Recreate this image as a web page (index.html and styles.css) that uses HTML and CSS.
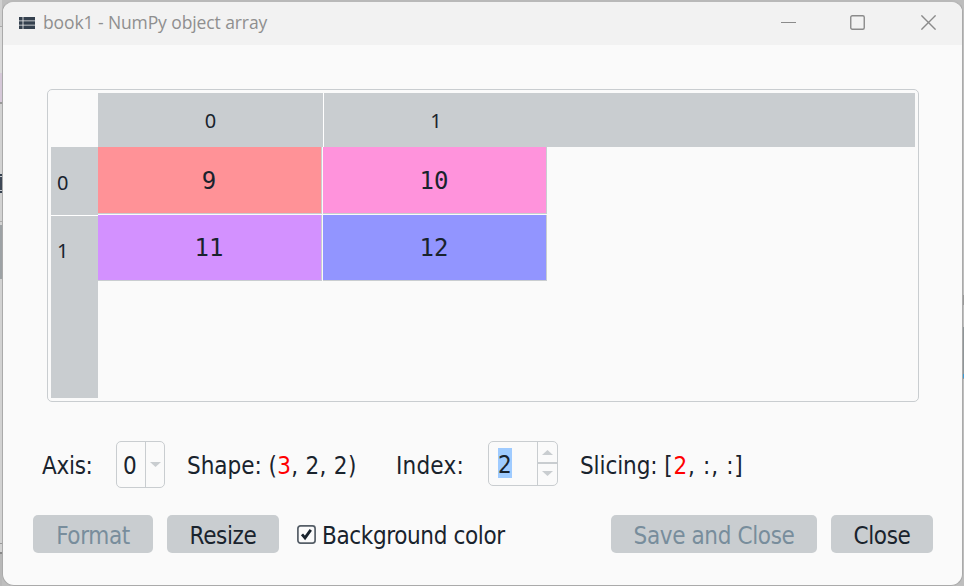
FILE: index.html
```html
<!DOCTYPE html>
<html lang="en">
<head>
<meta charset="utf-8">
<title>book1 - NumPy object array</title>
<link rel="stylesheet" href="styles.css">
</head>
<body>
<main class="window">
  <header class="titlebar">
    <svg class="app-icon" width="16" height="12" viewBox="0 0 16 12"><path fill="#35414f" d="M0 0h3.6v3.4H0zM4.4 0H16v3.4H4.4zM0 4.3h3.6v3.4H0zM4.4 4.3H16v3.4H4.4zM0 8.6h3.6V12H0zM4.4 8.6H16V12H4.4z"/></svg>
    <h1 class="title">book1 - NumPy object array</h1>
    <svg class="minimize" width="15" height="15" viewBox="0 0 15 15"><path d="M0 7.5h15"/></svg>
    <svg class="maximize" width="15" height="15" viewBox="0 0 15 15"><rect x=".75" y=".75" width="13.5" height="13.5" rx="1.5"/></svg>
    <svg class="dismiss" width="15" height="15" viewBox="0 0 15 15"><path d="M.4.4l14.2 14.2M14.6.4L.4 14.6"/></svg>
  </header>
  <section class="array">
    <div class="corner"></div>
    <div class="columns"><div class="col">0</div><div class="col">1</div></div>
    <div class="rows"><div class="row">0</div><div class="row">1</div></div>
    <div class="cells">
      <div class="cell red">9</div><div class="cell pink">10</div>
      <div class="cell violet">11</div><div class="cell blue">12</div>
    </div>
  </section>
  <section class="slicing">
    <span class="axis-label">Axis:</span>
    <div class="combo"><span class="combo-value">0</span><span class="combo-arrow"><svg width="11" height="5" viewBox="0 0 11 5"><path d="M0 0h11L5.5 5z"/></svg></span></div>
    <span class="shape">Shape: <span class="tuple">(<b>3</b>, 2, 2)</span></span>
    <span class="index-label">Index:</span>
    <div class="spin">
      <span class="spin-value"><mark>2</mark></span>
      <span class="steps">
        <span class="step"><svg width="11" height="5" viewBox="0 0 11 5"><path d="M0 5h11L5.5 0z"/></svg></span>
        <span class="step"><svg width="11" height="5" viewBox="0 0 11 5"><path d="M0 0h11L5.5 5z"/></svg></span>
      </span>
    </div>
    <span class="slice">Slicing: <span class="tuple">[<b>2</b>, :, :]</span></span>
  </section>
  <footer class="actions">
    <button class="format" disabled>Format</button>
    <button class="resize">Resize</button>
    <svg class="check" width="19" height="19" viewBox="0 0 19 19"><rect x=".9" y=".9" width="17.2" height="17.2" rx="2.6"/><path d="M5 9.4l3 3.5 5.8-8"/></svg>
    <span class="check-label">Background color</span>
    <button class="save" disabled>Save and Close</button>
    <button class="close">Close</button>
  </footer>
</main>
</body>
</html>
```

FILE: styles.css
```css
* { box-sizing: border-box; }
body {
  margin: 0;
  width: 964px;
  height: 586px;
  overflow: hidden;
  padding: 0 1px 0 2px;
  background:
    linear-gradient(#a0a0a0, #a0a0a0) 693px 0 / 12px 2px no-repeat,
    linear-gradient(#3c9bd6, #3c9bd6) 962px 374px / 2px 4px no-repeat,
    linear-gradient(#8f9598, #8f9598) 962px 327px / 2px 52px no-repeat,
    linear-gradient(#999, #999) 962px 295px / 2px 10px no-repeat,
    linear-gradient(#d0d0d0 26px, #aaa 26px 27px, #dadada 27px 73px, #d5c8d8 73px 102px, #999 102px 104px, #d2d2d2 104px 174px, #35414f 174px 176px, #c8ccd0 176px 177px, #3e4856 177px 190px, #c8ccd0 190px 191px, #35414f 191px 193px, #d2d2d2 193px 221px, #aaa 221px 222px, #d2d2d2 222px 225px, #9da2a5 225px 279px, #d2d2d2 279px 543px, #999 543px 544px, #d2d2d2 544px 552px, #888 552px 554px, #b8b8b8 554px) 0 0 / 2px 100% no-repeat,
    #bebebe;
  color: #19232d;
  font-family: "DejaVu Sans Condensed", "DejaVu Sans", sans-serif;
}
.window {
  width: 961px;
  height: 586px;
  border: 1px solid #aaa;
  border-top: 2px solid #b9b9b9;
  border-radius: 12px;
  background: #fafafa;
  overflow: hidden;
}
.titlebar {
  display: flex;
  align-items: center;
  height: 43px;
  padding: 0 26px 2px 16px;
  background: #f2f2f2;
}
.titlebar svg { fill: none; stroke: #8b8b8b; stroke-width: 1.4; }
.titlebar .app-icon { stroke: none; }
.titlebar .minimize { stroke-width: 1; }
.title {
  margin: 0 auto 0 8px;
  padding-bottom: 1px;
  font: 17.5px/23px "Open Sans", sans-serif;
  letter-spacing: -0.1px;
  color: #8f8f8f;
}
.maximize { margin-left: 54px; }
.dismiss { margin-left: 56px; }
.array {
  display: grid;
  grid-template: 54px 251px / 47px 817px;
  width: 872px;
  height: 313px;
  margin: 44px 0 0 44px;
  padding: 3px;
  border: 1px solid #c9cdd0;
  border-radius: 5px;
}
.columns, .rows { background: #c9cdd0; font: 20px "Noto Sans", sans-serif; }
.columns { display: flex; }
.col { display: grid; place-items: center; width: 226px; }
.col:last-child { width: 224px; }
.col:first-child { border-right: 1px solid #fff; }
.row { display: flex; align-items: center; height: 69px; padding: 3px 0 0 6px; }
.row:first-child { border-bottom: 1px solid #fff; }
.row:last-child { height: 65px; }
.cells {
  display: grid;
  grid-template: 68px 66px / 225px 224px;
  font: 24px "DejaVu Sans Mono", monospace;
}
.cell {
  display: grid;
  place-items: center;
  padding: 1px 1px 0 0;
  border: 0 solid #c9cdd0;
  border-width: 0 1px 1px 0;
}
.red, .pink { margin-bottom: 1px; }
.red, .violet { margin-right: 1px; }
.red { background: #ff9297; }
.pink { background: #ff93dc; }
.violet { background: #d391ff; }
.blue { background: #9295ff; }
.slicing {
  display: flex;
  align-items: center;
  height: 48px;
  margin-top: 38px;
  padding-left: 39px;
  font-size: 24px;
  letter-spacing: -0.3px;
  white-space: nowrap;
}
.slicing svg { fill: #c9cdd0; }
.slicing b { color: #f00; font-weight: 400; }
.axis-label { width: 74px; padding-top: 4px; }
.combo { display: flex; width: 49px; height: 47px; border: 1px solid #c9cdd0; border-radius: 5px; }
.combo-value { width: 28px; padding: 8px 0 0 6px; }
.combo-value, .spin-value { line-height: 33px; }
.combo-arrow { display: grid; flex: 1; place-items: center; border-left: 1px solid #c9cdd0; }
.shape { width: 209px; margin-left: 22px; padding-top: 3px; letter-spacing: -0.05px; }
.shape .tuple { letter-spacing: 0.3px; }
.index-label { width: 92px; padding-top: 4px; letter-spacing: 0.2px; }
.spin { display: flex; width: 70px; height: 45px; margin-bottom: 2px; border: 1px solid #c9cdd0; border-radius: 5px; }
.spin-value { width: 48px; padding: 6px 0 0 9px; }
.spin mark { display: block; width: 14px; height: 30px; line-height: 34px; background: #9fcbff; color: inherit; }
.steps { display: grid; flex: 1; grid-template-rows: 22px 1fr; border-left: 1px solid #c9cdd0; }
.step { display: grid; place-items: center; }
.step:first-child { padding-top: 2px; border-bottom: 2px solid #c9cdd0; }
.step:last-child { padding-bottom: 2px; }
.slice { margin-left: 22px; padding-top: 3px; letter-spacing: -0.1px; }
.slice .tuple { letter-spacing: 0.75px; }
.actions {
  display: flex;
  align-items: center;
  height: 38px;
  margin-top: 27px;
  padding-left: 30px;
  font-size: 24px;
  letter-spacing: -0.38px;
  white-space: nowrap;
}
button {
  height: 38px;
  padding: 3px 0 0;
  border: 0;
  border-radius: 5px;
  background: #c9cdd0;
  color: #19232d;
  font: 24px/34px "DejaVu Sans Condensed", "DejaVu Sans", sans-serif;
  letter-spacing: -0.38px;
}
button:disabled { color: #788d9c; }
.format { width: 120px; }
.resize { width: 112px; margin-left: 14px; }
.check { margin-left: 18px; fill: none; stroke: #555e67; stroke-width: 1.7; }
.check path { stroke: #19232d; stroke-width: 2.8; }
.check-label { width: 289px; margin-left: 6px; padding-top: 3px; }
.save { width: 206px; }
.close { width: 102px; margin-left: 14px; }
```
